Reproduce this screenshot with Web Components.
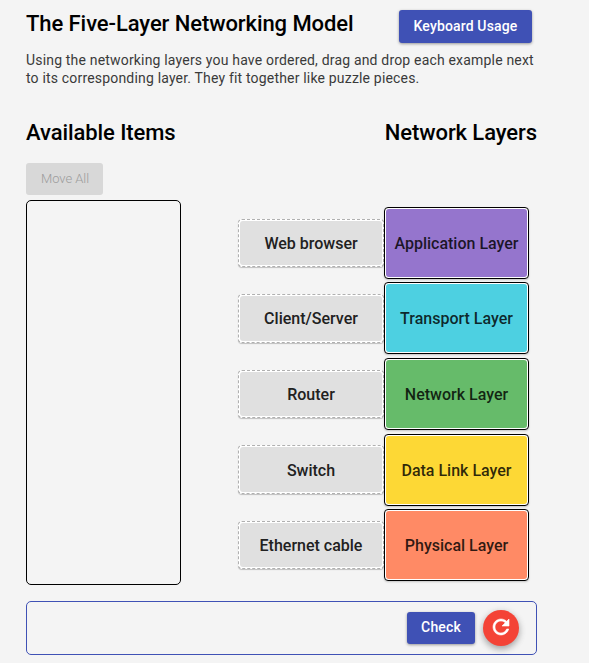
<!DOCTYPE html>
<html lang="en">
<head>
<meta charset="utf-8">
<title>The Five-Layer Networking Model</title>
<style>
html, body { margin: 0; background: #f4f4f4; }
body { font-family: Roboto, "Liberation Sans", sans-serif; }
</style>
</head>
<body>
<layer-activity></layer-activity>
<script>
class BaseElement extends HTMLElement {
  connectedCallback() {
    if (this.shadowRoot) return;
    this.attachShadow({ mode: "open" }).innerHTML =
      `<style>* { box-sizing: border-box; }${this.css()}</style>${this.html()}`;
  }
  html() { return "<slot></slot>"; }
}

customElements.define("app-button", class extends BaseElement {
  css() { return `
    :host { display: flex; align-items: center; justify-content: center; box-sizing: border-box;
      width: var(--w); height: var(--h, 32px); padding-bottom: 2px; border-radius: 3px; background: #3f51b5; color: #fff;
      font-size: 14px; font-weight: 500; letter-spacing: .15px; white-space: nowrap;
      box-shadow: 0 1px 3px rgba(0,0,0,.38); }
    :host([disabled]) { background: #d8d8d8; color: #9c9c9c; box-shadow: none; font-size: 13px; font-weight: 300;
      letter-spacing: -.05px; padding: 0 0 1px 1px; }`; }
});

customElements.define("reset-button", class extends BaseElement {
  css() { return `
    :host { display: grid; place-items: center; box-sizing: border-box; width: 36px; height: 36px; padding-bottom: 2px; border-radius: 50%;
      background: #f44336; box-shadow: 0 3px 6px rgba(0,0,0,.26), 0 2px 9px rgba(0,0,0,.12); }
    svg { display: block; fill: #fff; stroke: #fff; stroke-width: .6; }`; }
  html() { return `<svg width="24" height="24" viewBox="0 0 24 24"><path d="M17.65 6.35C16.2 4.9 14.21 4 12 4c-4.42 0-7.99 3.58-7.99 8s3.57 8 7.99 8c3.73 0 6.84-2.55 7.73-6h-2.08c-.82 2.33-3.04 4-5.65 4-3.31 0-6-2.69-6-6s2.69-6 6-6c1.66 0 3.14.69 4.22 1.78L13 11h7V4z"/></svg>`; }
});

customElements.define("section-title", class extends BaseElement {
  css() { return `
    :host { display: block; }
    h2 { margin: 0; font-size: 22px; line-height: 26px; font-weight: 500; color: #000; white-space: nowrap; letter-spacing: -.08px; }`; }
  html() { return "<h2><slot></slot></h2>"; }
});

customElements.define("drop-item", class extends BaseElement {
  css() { return `
    :host { display: block; box-sizing: border-box; width: 146px; height: 48.4px; padding: 1px; border: 1px dashed #b0b0b0;
      border-radius: 4px; background: #fff; box-shadow: 0 1px 1px rgba(0,0,0,.22); }
    div { height: 100%; display: flex; align-items: center; justify-content: center; padding-top: 1px; border-radius: 3px;
      background: #e0e0e0; color: #212121; font-size: 16px; font-weight: 500; white-space: nowrap; }`; }
  html() { return "<div><slot></slot></div>"; }
});

customElements.define("layer-tile", class extends BaseElement {
  css() { return `
    :host { display: block; box-sizing: border-box; width: 145px; height: 72px; padding: 1px; border: 1px solid #000;
      border-radius: 4px; background: #fff; box-shadow: 0 1px 2px rgba(0,0,0,.2); }
    div { height: 100%; display: flex; align-items: center; justify-content: center; padding-top: .9px; border-radius: 3px;
      background: var(--tone); color: rgba(0,0,0,.82); font-size: 16px; font-weight: 500; white-space: nowrap; }`; }
  html() { return "<div><slot></slot></div>"; }
});

customElements.define("layer-row", class extends BaseElement {
  css() { return `:host { display: flex; align-items: center; height: 72px; }`; }
});

customElements.define("layer-activity", class extends BaseElement {
  css() { return `
    :host { display: block; width: 511px; margin-left: 26px; padding-top: 10px; }
    header { display: flex; justify-content: space-between; padding-right: 5px; height: 40px; }
    header section-title { padding-top: 1px; }
    p { margin: 1px 0 0; font-size: 14px; line-height: 18px; color: #3a3a3a; white-space: nowrap; letter-spacing: .18px; }
    .titles { display: flex; justify-content: space-between; padding-top: 33px; height: 76px; }
    .board { display: flex; justify-content: space-between; height: 422px; }
    .bank { width: 155px; height: 385px; margin-top: 5px; border: 1px solid #000; border-radius: 5px; }
    .rows { display: flex; flex-direction: column; gap: 3.6px; padding: 43.8px 8px 0 0; }
    footer { display: flex; align-items: center; justify-content: flex-end; gap: 8px; height: 54px; margin-top: 16px;
      padding-right: 17px; border: 1px solid #3f51b5; border-radius: 5px; }`; }
  html() {
    const rows = [
      ["Web browser", "Application Layer", "#9575cd"],
      ["Client/Server", "Transport Layer", "#4dd0e1"],
      ["Router", "Network Layer", "#66bb6a"],
      ["Switch", "Data Link Layer", "#fdd835"],
      ["Ethernet cable", "Physical Layer", "#ff8a65"],
    ].map(([item, layer, tone]) =>
      `<layer-row><drop-item>${item}</drop-item><layer-tile style="--tone:${tone}">${layer}</layer-tile></layer-row>`).join("");
    return `
      <header><section-title>The Five-Layer Networking Model</section-title>
        <app-button style="--w:133px;--h:33px">Keyboard Usage</app-button></header>
      <p>Using the networking layers you have ordered, drag and drop each example next<br>to its corresponding layer. They fit together like puzzle pieces.</p>
      <div class="titles"><section-title>Available Items</section-title><section-title>Network Layers</section-title></div>
      <div class="board">
        <div><app-button disabled style="--w:77px">Move All</app-button><div class="bank"></div></div>
        <div class="rows">${rows}</div>
      </div>
      <footer><app-button style="--w:68px">Check</app-button><reset-button></reset-button></footer>`;
  }
});
</script>
</body>
</html>
